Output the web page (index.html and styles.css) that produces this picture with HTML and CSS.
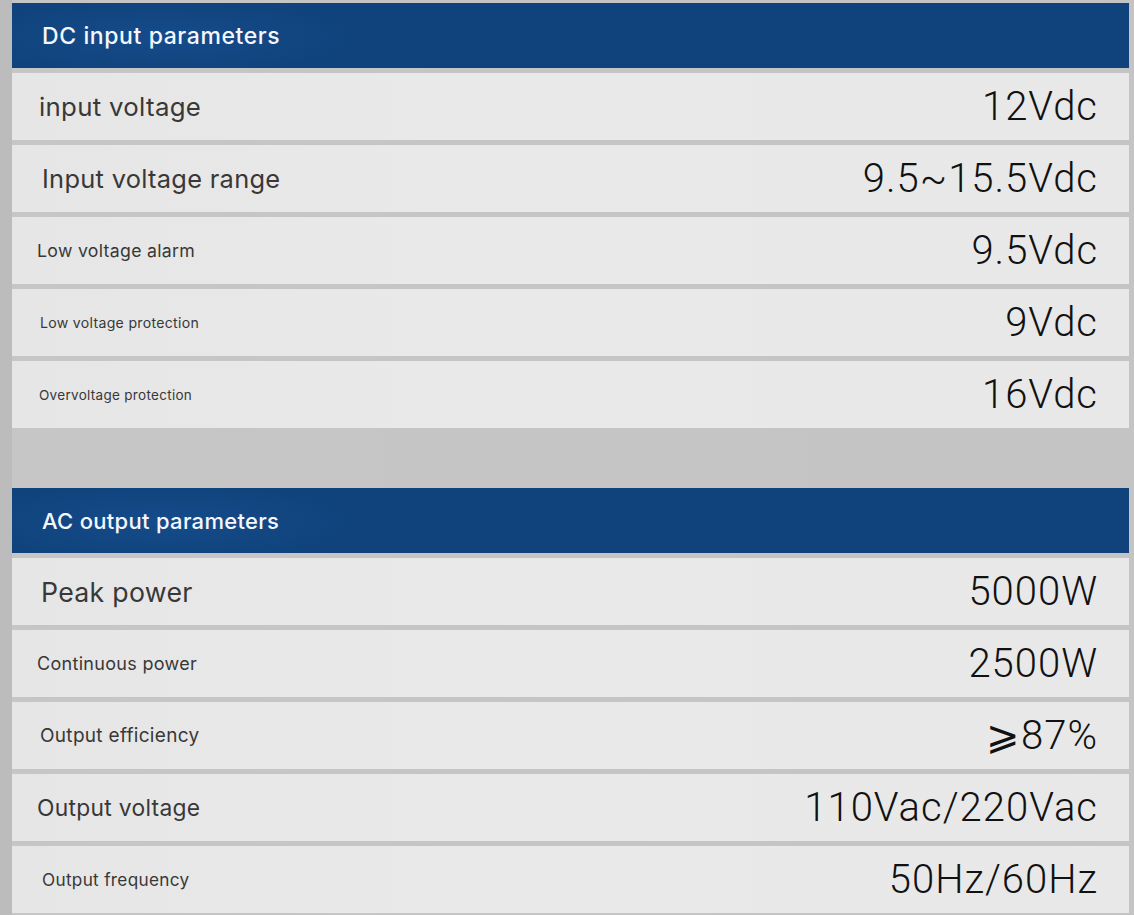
FILE: index.html
```html
<!DOCTYPE html>
<html lang="en">
<head>
<meta charset="utf-8">
<title>Parameters</title>
<link rel="stylesheet" href="styles.css">
</head>
<body>
<main class="page">
  <section class="group">
    <div class="head"><h2>DC input parameters</h2></div>
    <div class="row"><span class="label l1">input voltage</span><span class="value">12Vdc</span></div>
    <div class="row"><span class="label l2">Input voltage range</span><span class="value">9.5~15.5Vdc</span></div>
    <div class="row"><span class="label l3">Low voltage alarm</span><span class="value">9.5Vdc</span></div>
    <div class="row"><span class="label l4">Low voltage protection</span><span class="value">9Vdc</span></div>
    <div class="row"><span class="label l5">Overvoltage protection</span><span class="value">16Vdc</span></div>
  </section>
  <section class="group group-2">
    <div class="head"><h2 class="h-ac">AC output parameters</h2></div>
    <div class="row"><span class="label l6">Peak power</span><span class="value">5000W</span></div>
    <div class="row"><span class="label l7">Continuous power</span><span class="value">2500W</span></div>
    <div class="row"><span class="label l8">Output efficiency</span><span class="value">&#x2A7E;87%</span></div>
    <div class="row"><span class="label l9">Output voltage</span><span class="value">110Vac/220Vac</span></div>
    <div class="row"><span class="label l10">Output frequency</span><span class="value">50Hz/60Hz</span></div>
  </section>
</main>
</body>
</html>
```

FILE: styles.css
```css
html, body {
  margin: 0;
  padding: 0;
}
body {
  width: 1134px;
  height: 915px;
  overflow: hidden;
  background: linear-gradient(to right, #bcbcbc 0, #bcbcbc 12px, #c6c6c6 12px, #c4c4c4 100%);
  font-family: Inter, "Noto Sans", sans-serif;
}
.page {
  padding: 3px 5px 0 12px;
}
.group {
  display: flex;
  flex-direction: column;
  gap: 5px;
}
.group-2 {
  margin-top: 60px;
}
.head {
  height: 65px;
  display: flex;
  align-items: center;
  padding-left: 30px;
  background:
    radial-gradient(ellipse 200px 40px at 150px 34px, rgba(30, 90, 170, 0.35), rgba(30, 90, 170, 0) 100%),
    #10437b;
}
.head h2 {
  margin: 0;
  color: #f4f7fb;
  font-size: 23px;
  font-weight: 500;
  letter-spacing: 0.6px;
}
.head .h-ac {
  font-size: 22px;
  letter-spacing: 0.3px;
}
.row {
  height: 67px;
  display: flex;
  align-items: center;
  justify-content: space-between;
  padding: 0 31px 0 27px;
  background: linear-gradient(to right, #e6e6e6 0%, #e9e9e9 40%, #e8e8e8 100%);
}
.label {
  color: #383838;
  font-weight: 400;
  letter-spacing: 0.3px;
}
.value {
  font-family: Roboto, "DejaVu Sans", sans-serif;
  font-size: 40px;
  font-weight: 300;
  color: #111;
  letter-spacing: 1px;
}
.l1 { font-size: 25.8px; }
.l2 { font-size: 25.4px; padding-left: 3px; }
.l3 { font-size: 17.7px; margin-left: -2px; }
.l4 { font-size: 14.1px; padding-left: 1px; }
.l5 { font-size: 13.5px; }
.l6 { font-size: 26.7px; padding-left: 2px; }
.l7 { font-size: 18px; margin-left: -2px; }
.l8 { font-size: 19px; padding-left: 1px; }
.l9 { font-size: 22.8px; margin-left: -2px; }
.l10 { font-size: 17.2px; padding-left: 3px; }
```
